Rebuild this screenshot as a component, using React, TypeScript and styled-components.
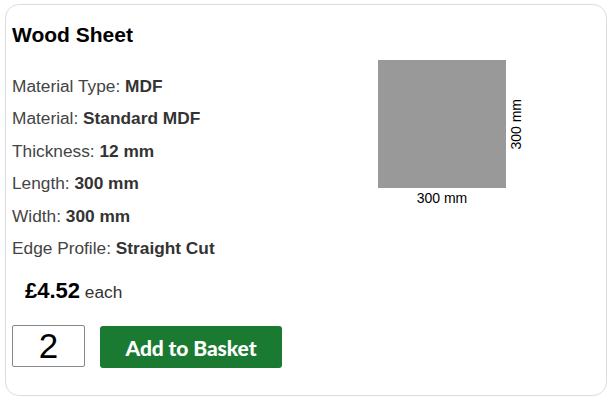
import React, { useState } from 'react';
import styled, { createGlobalStyle } from 'styled-components';

const GlobalStyle = createGlobalStyle`
  body {
    margin: 0;
    background: #fff;
    font-family: 'Liberation Sans', Arial, sans-serif;
  }
`;

const specs = [
  { label: 'Material Type', value: 'MDF' },
  { label: 'Material', value: 'Standard MDF' },
  { label: 'Thickness', value: '12 mm' },
  { label: 'Length', value: '300 mm' },
  { label: 'Width', value: '300 mm' },
  { label: 'Edge Profile', value: 'Straight Cut' },
];

const App = () => {
  const [qty, setQty] = useState('2');

  return (
    <>
      <GlobalStyle />
      <Card>
        <Title>Wood Sheet</Title>
        <Body>
          <Details>
            <SpecList>
              {specs.map((s) => (
                <SpecRow key={s.label}>
                  {s.label}: <strong>{s.value}</strong>
                </SpecRow>
              ))}
            </SpecList>
            <Price>
              <Amount>£4.52</Amount> each
            </Price>
            <BuyRow>
              <QtyInput value={qty} onChange={(e) => setQty(e.target.value)} />
              <AddButton>Add to Basket</AddButton>
            </BuyRow>
          </Details>
          <Preview>
            <PreviewRow>
              <Sheet />
              <SideLabel>300 mm</SideLabel>
            </PreviewRow>
            <BottomLabel>300 mm</BottomLabel>
          </Preview>
        </Body>
      </Card>
    </>
  );
};

const Card = styled.div`
  box-sizing: border-box;
  margin: 4px 6px 0 5px;
  width: 602px;
  height: 392px;
  border: 1px solid #dcdcdc;
  border-radius: 14px;
  padding: 18px 6px 0 6px;
`;

const Title = styled.h1`
  margin: 0;
  font-size: 21px;
  font-weight: 700;
  color: #000;
  line-height: 24px;
`;

const Body = styled.div`
  display: flex;
  margin-top: 13px;
`;

const Details = styled.div`
  width: 366px;
`;

const SpecList = styled.div`
  display: flex;
  flex-direction: column;
  margin-top: 9.5px;
`;

const SpecRow = styled.div`
  font-size: 17.3px;
  line-height: 19px;
  color: #444;
  padding: 7px 0 6.5px;

  strong {
    font-weight: 700;
    color: #333;
  }
`;

const Price = styled.div`
  margin: 13.5px 0 0 13px;
  font-size: 17.3px;
  color: #333;
  line-height: 26px;
`;

const Amount = styled.span`
  font-size: 22px;
  font-weight: 700;
  color: #000;
`;

const BuyRow = styled.div`
  display: flex;
  align-items: flex-start;
  gap: 15px;
  margin-top: 20px;
`;

const QtyInput = styled.input`
  box-sizing: border-box;
  width: 73px;
  height: 42px;
  border: 1px solid #888;
  border-radius: 2px;
  font-family: 'Liberation Sans', Arial, sans-serif;
  font-size: 35px;
  text-align: center;
  color: #000;
  padding: 0;
  outline: none;
`;

const AddButton = styled.button`
  width: 182px;
  height: 42px;
  margin-top: 1px;
  border: none;
  border-radius: 3px;
  background: #1a7a32;
  color: #fff;
  font-family: Lato, 'Open Sans', sans-serif;
  font-weight: 900;
  font-size: 21px;
  letter-spacing: -0.1px;
  cursor: pointer;
`;

const Preview = styled.div`
  display: flex;
  flex-direction: column;
`;

const PreviewRow = styled.div`
  display: flex;
  align-items: center;
`;

const Sheet = styled.div`
  width: 128px;
  height: 128px;
  background: #999;
`;

const SideLabel = styled.div`
  writing-mode: vertical-rl;
  transform: rotate(180deg);
  font-size: 14px;
  color: #000;
  line-height: 16px;
  margin-left: 2px;
`;

const BottomLabel = styled.div`
  width: 128px;
  text-align: center;
  font-size: 14px;
  line-height: 16px;
  color: #000;
  margin-top: 2px;
`;

export default App;
